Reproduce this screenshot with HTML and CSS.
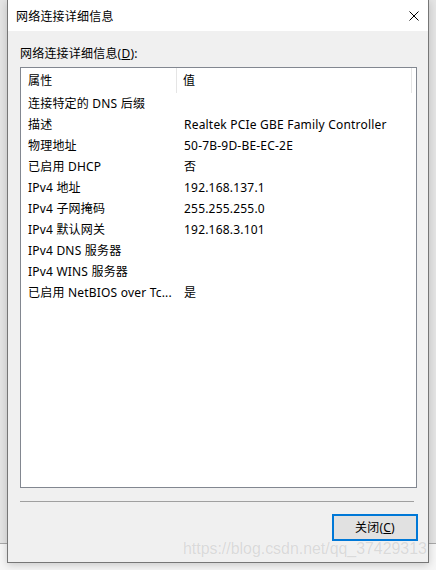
FILE: index.html
```html
<!DOCTYPE html>
<html lang="zh-CN">
<head>
<meta charset="utf-8">
<title>网络连接详细信息</title>
<link rel="stylesheet" href="styles.css">
</head>
<body>
<div class="desk">
  <div class="window">
    <div class="titlebar">
      <span class="title">网络连接详细信息</span>
      <svg class="close" width="10" height="10" viewBox="0 0 10 10"><path d="M0.5 0.5 L9.5 9.5 M9.5 0.5 L0.5 9.5" stroke="#000" stroke-width="1" fill="none"/></svg>
    </div>
    <div class="content">
      <div class="label">网络连接详细信息(<u>D</u>):</div>
      <div class="listview">
        <div class="header">
          <div class="hcell c1">属性</div>
          <div class="hcell c2">值</div>
        </div>
        <div class="row"><div class="c1">连接特定的 DNS 后缀</div><div class="c2"></div></div>
        <div class="row"><div class="c1">描述</div><div class="c2">Realtek PCIe GBE Family Controller</div></div>
        <div class="row"><div class="c1">物理地址</div><div class="c2">50-7B-9D-BE-EC-2E</div></div>
        <div class="row"><div class="c1">已启用 DHCP</div><div class="c2">否</div></div>
        <div class="row"><div class="c1">IPv4 地址</div><div class="c2">192.168.137.1</div></div>
        <div class="row"><div class="c1">IPv4 子网掩码</div><div class="c2">255.255.255.0</div></div>
        <div class="row"><div class="c1">IPv4 默认网关</div><div class="c2">192.168.3.101</div></div>
        <div class="row"><div class="c1">IPv4 DNS 服务器</div><div class="c2"></div></div>
        <div class="row"><div class="c1">IPv4 WINS 服务器</div><div class="c2"></div></div>
        <div class="row"><div class="c1">已启用 NetBIOS over Tc...</div><div class="c2">是</div></div>
      </div>
      <div class="separator"></div>
      <div class="buttons">
        <button class="btn">关闭(<u>C</u>)</button>
      </div>
    </div>
  </div>
  <div class="watermark">https://blog.csdn.net/qq_37429313</div>
</div>
</body>
</html>
```

FILE: styles.css
```css
html, body {
  margin: 0;
  padding: 0;
}
body {
  width: 436px;
  height: 570px;
  overflow: hidden;
  background: linear-gradient(to bottom, #e4e4e4 0, #e4e4e4 543px, #a8a8a8 543px, #a8a8a8 544px, #f6f6f6 544px);
  font-family: "Noto Sans", "Noto Sans CJK SC", sans-serif;
  font-size: 12px;
  letter-spacing: 0.2px;
  color: #000;
}
.desk {
  position: relative;
  width: 436px;
  height: 570px;
  padding-left: 7px;
  box-sizing: border-box;
}
.window {
  width: 422px;
  height: 563px;
  box-sizing: border-box;
  border: 1px solid #767676;
  border-top: none;
  background: #f0f0f0;
  display: flex;
  flex-direction: column;
  box-shadow: 0 2px 8px rgba(0,0,0,0.18);
}
.titlebar {
  height: 31px;
  flex: none;
  background: #fff;
  display: flex;
  align-items: center;
  justify-content: space-between;
  padding: 2px 9px 0 8px;
  box-sizing: border-box;
}
.title {
  font-size: 12px;
  line-height: 16px;
}
.close {
  display: block;
  margin-bottom: 2px;
}
.content {
  flex: 1;
  display: flex;
  flex-direction: column;
  padding: 15px 11px 0 12px;
}
.label {
  line-height: 16px;
  height: 16px;
}
.listview {
  margin-top: 5px;
  height: 421px;
  box-sizing: border-box;
  border: 1px solid #828790;
  background: #fff;
}
.header {
  display: flex;
  height: 25px;
}
.hcell {
  display: flex;
  align-items: center;
  line-height: 16px;
}
.header .c1 {
  border-right: 1px solid #e5e5e5;
}
.header .c2 {
  width: 228px;
  border-right: 1px solid #e5e5e5;
}
.c1 {
  width: 156px;
  padding-left: 7px;
  box-sizing: border-box;
  white-space: nowrap;
  overflow: hidden;
}
.c2 {
  padding-left: 6px;
  white-space: nowrap;
}
.row {
  display: flex;
  height: 21px;
  line-height: 21px;
}
.row .c1 {
  width: 157px;
}
.separator {
  margin-top: 13px;
  margin-right: 3px;
  height: 1px;
  background: #a0a0a0;
}
.buttons {
  display: flex;
  justify-content: flex-end;
  margin-top: 12px;
  margin-right: -1px;
}
.btn {
  width: 86px;
  height: 27px;
  box-sizing: border-box;
  border: 2px solid #0078d7;
  background: #e1e1e1;
  font-family: "Noto Sans", "Noto Sans CJK SC", sans-serif;
  font-size: 12px;
  letter-spacing: 0.2px;
  color: #000;
  padding: 0;
  line-height: 16px;
}
.watermark {
  position: absolute;
  left: 183px;
  top: 540px;
  font-family: "Liberation Sans", Arial, sans-serif;
  font-size: 15.9px;
  letter-spacing: 0;
  color: rgba(190, 190, 190, 0.55);
  text-shadow: 0 0 1px rgba(255,255,255,0.8);
  white-space: nowrap;
}
```
